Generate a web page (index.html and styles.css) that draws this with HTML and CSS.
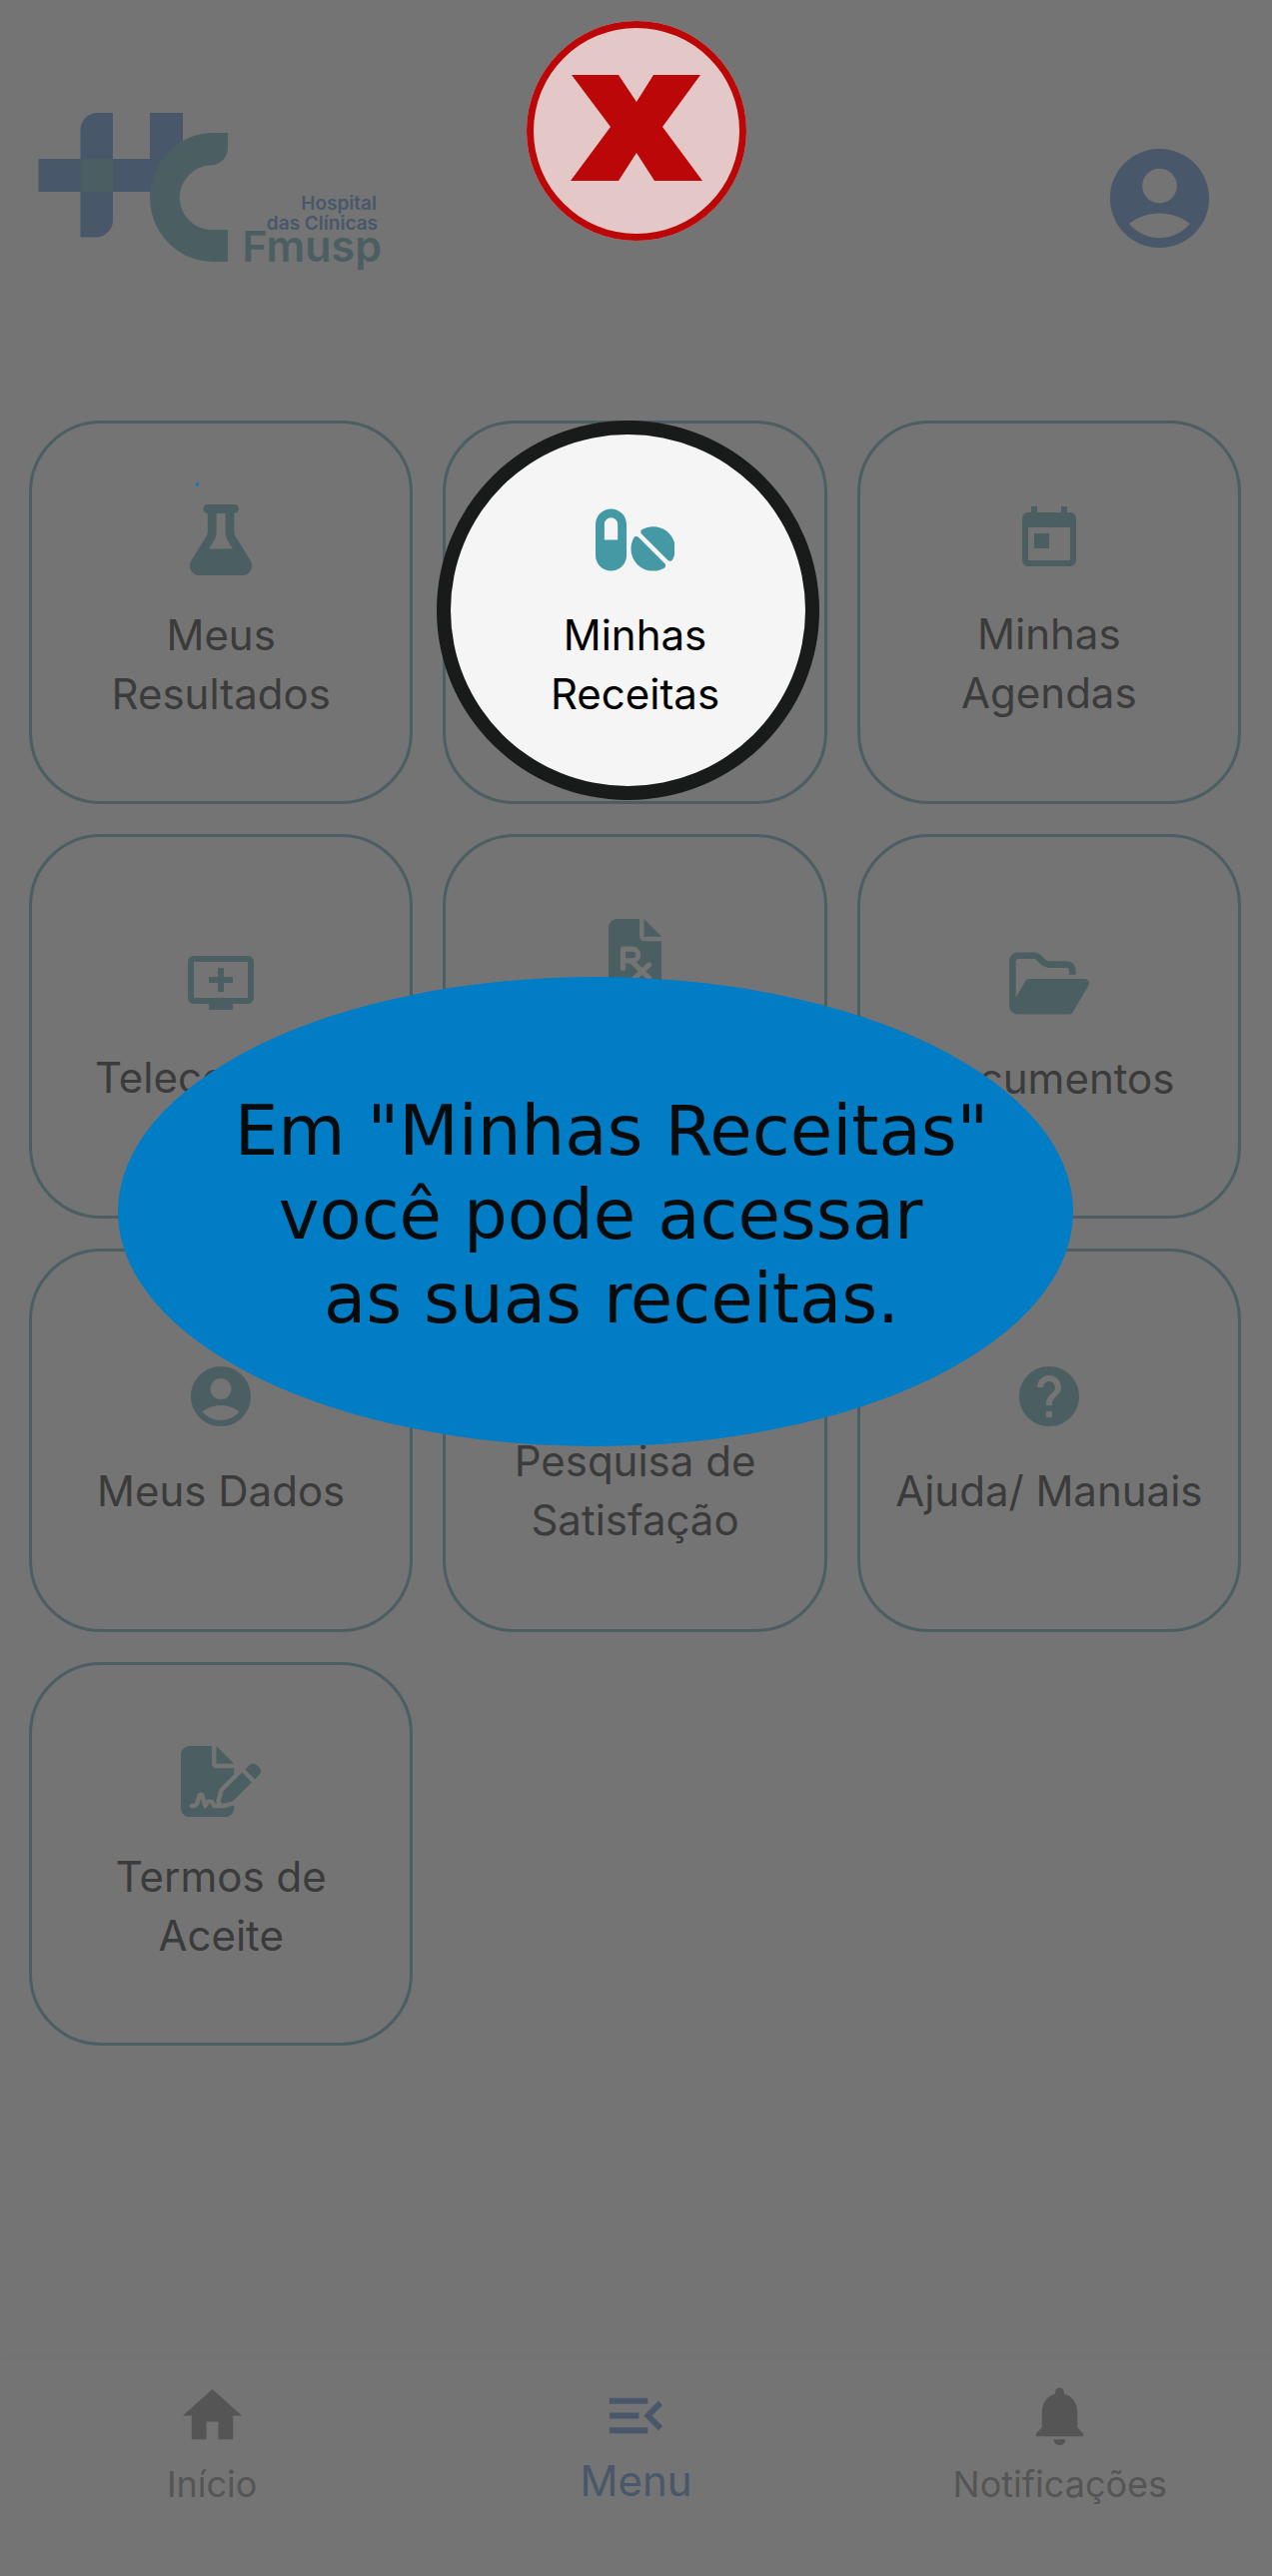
FILE: index.html
```html
<!DOCTYPE html>
<html lang="pt-BR">
<head>
<meta charset="utf-8">
<meta name="viewport" content="width=device-width, initial-scale=1">
<title>Menu - HC Fmusp</title>
<link rel="stylesheet" href="styles.css">
</head>
<body>
<header class="header">
  <svg class="logo" viewBox="38 113 346 170" role="img" aria-label="Hospital das Clínicas Fmusp">
    <g class="logo-blue">
      <path d="M98 113h15v107a17 17 0 0 1-17 17.500h-15.500V131a17 17 0 0 1 17.500-18z"/>
      <path d="M38.500 159H150v-46h33v60l-30 19H38.500z"/>
    </g>
    <g class="logo-teal">
      <path d="M80.500 159h32.500v33h-32.500z"/>
      <path d="M228 133v15a17.500 17.500 0 0 1-17 17.500a32 32 0 0 0 2 64.500h15v32h-15a63 64.500 0 0 1 0-129z"/>
    </g>
    <text class="logo-small" x="377" y="210">Hospital</text>
    <text class="logo-small" x="378" y="230">das Clínicas</text>
    <text class="logo-large" x="382" y="262">Fmusp</text>
  </svg>
  <a class="profile" href="#perfil" aria-label="Perfil">
    <svg viewBox="0 0 24 24"><path d="M12 2C6.480 2 2 6.480 2 12s4.480 10 10 10 10-4.480 10-10S17.520 2 12 2zm0 4c1.930 0 3.500 1.570 3.500 3.500S13.930 13 12 13s-3.500-1.570-3.500-3.500S10.070 6 12 6zm0 14c-2.030 0-4.430-.82-6.140-2.880C7.550 15.800 9.680 15 12 15s4.450.8 6.140 2.120C16.430 19.180 14.030 20 12 20z"/></svg>
  </a>
</header>

<main class="grid">
  <a class="card card-marked" href="#resultados">
    <svg class="icon icon-solid" viewBox="0 0 448 512"><path d="M288 0L160 0 128 0C110.300 0 96 14.300 96 32s14.300 32 32 32l0 132.800c0 11.800-3.300 23.500-9.500 33.500L10.300 406.200C3.600 417.200 0 429.700 0 442.600C0 480.900 31.100 512 69.400 512l309.200 0c38.300 0 69.400-31.100 69.400-69.400c0-12.800-3.600-25.400-10.300-36.400L329.500 230.400c-6.200-10.100-9.500-21.700-9.500-33.500L320 64c17.700 0 32-14.300 32-32s-14.300-32-32-32L288 0zM192 196.800L192 64l64 0 0 132.800c0 23.700 6.600 46.900 19 67.100L309.500 320l-171 0L173 263.900c12.400-20.200 19-43.400 19-67.100z"/></svg>
    <span class="label">Meus<br>Resultados</span>
  </a>
  <a class="card card-spotlight" href="#receitas">
    <svg class="icon icon-solid" viewBox="0 0 576 512"><path d="M112 96c-26.500 0-48 21.500-48 48l0 112 96 0 0-112c0-26.500-21.500-48-48-48zM0 144C0 82.100 50.100 32 112 32s112 50.100 112 112l0 224c0 61.900-50.100 112-112 112S0 429.900 0 368L0 144zM554.900 399.400c-7.100 12.300-23.700 13.100-33.800 3.100L333.500 214.900c-10-10-9.300-26.700 3.100-33.800C360 167.700 387.100 160 416 160c88.400 0 160 71.600 160 160c0 28.900-7.700 56-21.100 79.400zm-59.500 59.500C472 472.300 444.900 480 416 480c-88.400 0-160-71.600-160-160c0-28.900 7.700-56 21.100-79.400c7.100-12.300 23.700-13.100 33.800-3.100L498.500 425.100c10 10 9.300 26.700-3.100 33.800z"/></svg>
    <span class="label">Minhas<br>Receitas</span>
  </a>
  <a class="card" href="#agendas">
    <svg class="icon" viewBox="0 0 24 24"><path d="M19 3h-1V1h-2v2H8V1H6v2H5c-1.110 0-1.990.9-1.990 2L3 19c0 1.100.89 2 2 2h14c1.100 0 2-.9 2-2V5c0-1.100-.9-2-2-2zm0 16H5V8h14v11zM7 10h5v5H7z"/></svg>
    <span class="label">Minhas<br>Agendas</span>
  </a>
  <a class="card" href="#teleconsulta">
    <svg class="icon" viewBox="0 0 24 24"><path d="M21 3H3c-1.110 0-2 .89-2 2v12c0 1.100.89 2 2 2h5v2h8v-2h5c1.100 0 1.990-.9 1.990-2L23 5c0-1.110-.9-2-2-2zm0 14H3V5h18v12zm-5-7v2h-3v3h-2v-3H8v-2h3V7h2v3h3z"/></svg>
    <span class="label">Teleconsulta</span>
  </a>
  <a class="card" href="#prescricao">
    <svg class="icon icon-solid" viewBox="0 0 384 512"><path d="M64 0C28.700 0 0 28.700 0 64L0 448c0 35.300 28.700 64 64 64l256 0c35.300 0 64-28.700 64-64l0-288-128 0c-17.700 0-32-14.300-32-32L224 0 64 0zM256 0l0 128 128 0L256 0z"/><path class="icon-cut" d="M104 356V218h68a42 42 0 0 1 0 84h-64M166 306L292 426M292 332L190 426"/></svg>
    <span class="label label-double"></span>
  </a>
  <a class="card" href="#documentos">
    <svg class="icon icon-solid" viewBox="0 0 576 512"><path d="M384 480l48 0c11.400 0 21.900-6 27.600-15.900l112-192c5.800-9.900 5.800-22.100 .1-32.100S555.500 224 544 224l-400 0c-11.400 0-21.900 6-27.600 15.900L48 357.100 48 96c0-8.800 7.200-16 16-16l117.500 0c4.200 0 8.300 1.700 11.300 4.700l26.500 26.500c21 21 49.500 32.800 79.200 32.800L416 144c8.800 0 16 7.200 16 16l0 32 48 0 0-32c0-35.300-28.700-64-64-64L298.500 96c-17 0-33.300-6.700-45.300-18.700L226.700 50.700c-12-12-28.300-18.700-45.300-18.700L64 32C28.700 32 0 60.700 0 96L0 416c0 35.300 28.700 64 64 64l23.700 0L384 480z"/></svg>
    <span class="label">Documentos</span>
  </a>
  <a class="card" href="#dados">
    <svg class="icon" viewBox="0 0 24 24"><path d="M12 2C6.480 2 2 6.480 2 12s4.480 10 10 10 10-4.480 10-10S17.520 2 12 2zm0 4c1.930 0 3.500 1.570 3.500 3.500S13.930 13 12 13s-3.500-1.570-3.500-3.500S10.070 6 12 6zm0 14c-2.030 0-4.430-.82-6.140-2.880C7.550 15.800 9.680 15 12 15s4.450.8 6.140 2.120C16.430 19.180 14.030 20 12 20z"/></svg>
    <span class="label">Meus Dados</span>
  </a>
  <a class="card" href="#pesquisa">
    <span class="icon"></span>
    <span class="label">Pesquisa de<br>Satisfação</span>
  </a>
  <a class="card" href="#ajuda">
    <svg class="icon" viewBox="0 0 24 24"><path d="M12 2C6.480 2 2 6.480 2 12s4.480 10 10 10 10-4.480 10-10S17.520 2 12 2zm1 17h-2v-2h2v2zm2.070-7.750l-.9.920C13.450 12.900 13 13.500 13 15h-2v-.5c0-1.100.45-2.100 1.170-2.830l1.240-1.260c.37-.36.59-.86.59-1.410 0-1.100-.9-2-2-2s-2 .9-2 2H8c0-2.210 1.790-4 4-4s4 1.790 4 4c0 .88-.36 1.680-.93 2.250z"/></svg>
    <span class="label">Ajuda/ Manuais</span>
  </a>
  <a class="card" href="#termos">
    <svg class="icon icon-solid" viewBox="0 0 576 512"><path d="M64 0C28.700 0 0 28.700 0 64L0 448c0 35.300 28.700 64 64 64l256 0c35.300 0 64-28.700 64-64l0-19.300c-2.700 1.100-5.400 2-8.200 2.700l-60.100 15c-3 .7-6 1.200-9 1.400c-.9 .1-1.800 .2-2.700 .2l-64 0c-6.100 0-11.600-3.400-14.300-8.800l-8.800-17.700c-1.700-3.400-5.100-5.500-8.800-5.500s-7.200 2.100-8.800 5.500l-8.800 17.700c-2.900 5.900-9.200 9.400-15.700 8.800s-12.100-5.100-13.900-11.300L144 381l-9.800 32.800c-6.100 20.300-24.800 34.200-46 34.200L80 448c-8.800 0-16-7.200-16-16s7.200-16 16-16l8.200 0c7.100 0 13.300-4.600 15.300-11.400l14.900-49.500c3.400-11.300 13.800-19.100 25.600-19.100s22.200 7.700 25.600 19.100l11.600 38.600c7.400-6.200 16.800-9.700 26.800-9.700c15.900 0 30.400 9 37.500 23.200l4.400 8.800 8.900 0c-3.100-8.800-3.700-18.400-1.400-27.800l15-60.100c2.800-11.300 8.600-21.500 16.800-29.700L384 203.600l0-43.600-128 0c-17.700 0-32-14.300-32-32L224 0 64 0zM256 0l0 128 128 0L256 0zM549.800 139.700c-15.600-15.600-40.900-15.600-56.600 0l-29.400 29.400 71 71 29.400-29.400c15.600-15.600 15.600-40.900 0-56.600l-14.400-14.400zM311.900 321c-4.100 4.100-7 9.200-8.400 14.900l-15 60.100c-1.400 5.500 .2 11.200 4.200 15.200s9.700 5.600 15.200 4.200l60.100-15c5.600-1.400 10.800-4.300 14.900-8.400L512.100 262.700l-71-71L311.900 321z"/></svg>
    <span class="label">Termos de<br>Aceite</span>
  </a>
</main>

<nav class="nav">
  <a class="nav-item" href="#inicio">
    <svg class="nav-icon" viewBox="0 0 24 24"><path d="M10 20v-6h4v6h5v-8h3L12 3 2 12h3v8z"/></svg>
    <span>Início</span>
  </a>
  <a class="nav-item nav-active" href="#menu" aria-current="page">
    <svg class="nav-icon" viewBox="0 0 24 24"><path d="M3 18h13v-2H3v2zm0-5h10v-2H3v2zm0-7v2h13V6H3zm18 9.590L17.420 12 21 8.410 19.590 7l-5 5 5 5L21 15.590z"/></svg>
    <span>Menu</span>
  </a>
  <a class="nav-item" href="#notificacoes">
    <svg class="nav-icon" viewBox="0 0 24 24"><path d="M12 22c1.100 0 2-.9 2-2h-4c0 1.100.89 2 2 2zm6-6v-5c0-3.070-1.640-5.640-4.500-6.320V4c0-.83-.67-1.500-1.500-1.500s-1.500.67-1.500 1.500v.68C7.630 5.360 6 7.920 6 11v5l-2 2v1h16v-1l-2-2z"/></svg>
    <span>Notificações</span>
  </a>
</nav>

<button class="close" type="button" aria-label="Fechar">
  <svg viewBox="0 0 220 220"><path d="M45 54h47l18 27 17-27h47l-38 52 40 54h-48l-18-28-18 28H44l40-54z"/></svg>
</button>
<p class="bubble" role="status">Em "Minhas Receitas"<br>você pode acessar&nbsp;<br>as suas receitas.</p>
</body>
</html>
```
FILE: styles.css
```css
:root {
  --bg: #747474;
  --teal: #4b5f62;
  --blue: #485769;
  --ink: #3b3b3b;
  --muted: #555555;
}

* {
  box-sizing: border-box;
}

body {
  position: relative;
  display: flex;
  flex-direction: column;
  min-height: 100vh;
  margin: 0;
  background: var(--bg);
  color: var(--ink);
  font-family: Inter, "Liberation Sans", sans-serif;
}

a {
  color: inherit;
  text-decoration: none;
}

svg {
  display: block;
  fill: currentColor;
}

.header {
  display: flex;
  align-items: center;
  justify-content: space-between;
  padding: 113px 53px 138px 38px;
}

.logo {
  width: 346px;
  height: 170px;
}

.logo-blue,
.logo-small {
  fill: var(--blue);
}

.logo-teal,
.logo-large {
  fill: var(--teal);
}

.logo-small,
.logo-large {
  font-weight: 600;
  text-anchor: end;
}

.logo-small {
  font-size: 19px;
}

.logo-large {
  font-size: 43px;
}

.profile {
  width: 119px;
  color: var(--blue);
}

.grid {
  display: grid;
  grid-template-columns: repeat(3, 1fr);
  gap: 30px;
  padding: 0 31px 30px 29px;
}

.card {
  position: relative;
  display: flex;
  flex-direction: column;
  align-items: center;
  justify-content: center;
  gap: 29px;
  aspect-ratio: 1;
  border: 3px solid var(--teal);
  border-radius: 72px;
}

.icon {
  height: 72px;
  color: var(--teal);
}

.icon-solid {
  box-sizing: content-box;
  height: 71px;
  padding: 3px 0 1px;
}

.icon-cut {
  fill: none;
  stroke: var(--bg);
  stroke-width: 38;
  stroke-linecap: round;
  stroke-linejoin: round;
}

.label {
  font-size: 42px;
  line-height: 59px;
  text-align: center;
  white-space: nowrap;
}

.label-double {
  height: 118px;
}

.card-marked::after {
  content: "";
  position: absolute;
  top: 59px;
  left: 164px;
  width: 3px;
  height: 4px;
  border-radius: 50%;
  background: #007dc5;
}

.card-spotlight::before {
  content: "";
  position: absolute;
  inset: -3px 5px 1px -9px;
  border: 14px solid #191b1a;
  border-radius: 50%;
  background: #f5f5f5;
}

.card-spotlight .icon,
.card-spotlight .label {
  z-index: 1;
}

.card-spotlight .icon {
  color: #4499a5;
}

.card-spotlight .label {
  color: #000000;
}

.nav {
  display: grid;
  grid-template-columns: repeat(3, 1fr);
  margin-top: auto;
  padding: 21px 0 58px;
  box-shadow: 0 -2px 6px rgba(0, 0, 0, 0.02);
}

.nav-item {
  display: flex;
  flex-direction: column;
  align-items: center;
  color: var(--muted);
  font-size: 36px;
  line-height: 67px;
}

.nav-active {
  color: var(--blue);
  font-size: 42px;
  line-height: 60px;
}

.nav-icon {
  height: 71px;
}

.close {
  position: absolute;
  top: 21px;
  left: 50%;
  width: 220px;
  height: 220px;
  margin-left: -110px;
  padding: 0;
  border: 0;
  border-radius: 50%;
  background: #e4c8c8;
  box-shadow: inset 0 0 0 7px #bb0707;
  color: #bb0707;
}

.bubble {
  position: absolute;
  top: 978px;
  left: 118px;
  right: 199px;
  display: flex;
  flex-direction: column;
  justify-content: center;
  height: 470px;
  margin: 0;
  padding: 6px 0 0 32px;
  border-radius: 50%;
  background: #007dc5;
  color: #070b0c;
  font-family: "DejaVu Sans", sans-serif;
  font-size: 69px;
  line-height: 84px;
  text-align: center;
  white-space: nowrap;
}
```
